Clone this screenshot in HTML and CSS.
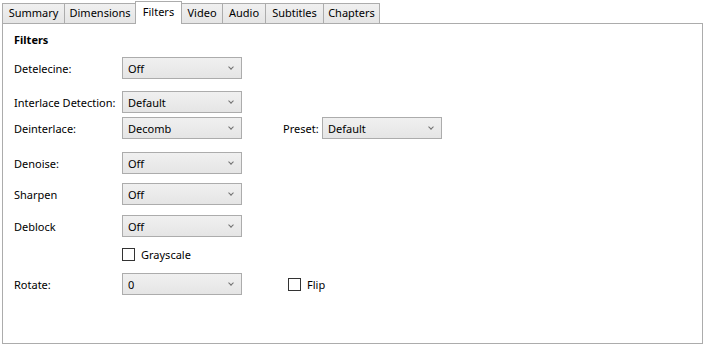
FILE: index.html
```html
<!DOCTYPE html>
<html lang="en">
<head>
    <meta charset="UTF-8">
    <meta name="viewport" content="width=device-width, initial-scale=1.0">
    <title>Filters</title>
    <link rel="stylesheet" href="styles.css">
</head>
<body>
    <div class="tabs">
        <div class="tab tab-summary">Summary</div>
        <div class="tab tab-dimensions">Dimensions</div>
        <div class="tab tab-filters active">Filters</div>
        <div class="tab tab-video">Video</div>
        <div class="tab tab-audio">Audio</div>
        <div class="tab tab-subtitles">Subtitles</div>
        <div class="tab tab-chapters">Chapters</div>
    </div>

    <div class="panel">
        <h2 class="title">Filters</h2>

        <div class="row row-detelecine">
            <span class="label">Detelecine:</span>
            <div class="combo"><span>Off</span><i class="arrow"></i></div>
        </div>

        <div class="row row-interlace">
            <span class="label">Interlace Detection:</span>
            <div class="combo"><span>Default</span><i class="arrow"></i></div>
        </div>

        <div class="row row-deinterlace">
            <span class="label">Deinterlace:</span>
            <div class="combo"><span>Decomb</span><i class="arrow"></i></div>
            <span class="label-preset">Preset:</span>
            <div class="combo"><span>Default</span><i class="arrow"></i></div>
        </div>

        <div class="row row-denoise">
            <span class="label">Denoise:</span>
            <div class="combo"><span>Off</span><i class="arrow"></i></div>
        </div>

        <div class="row row-sharpen">
            <span class="label">Sharpen</span>
            <div class="combo"><span>Off</span><i class="arrow"></i></div>
        </div>

        <div class="row row-deblock">
            <span class="label">Deblock</span>
            <div class="combo"><span>Off</span><i class="arrow"></i></div>
        </div>

        <div class="row row-grayscale">
            <span class="label"></span>
            <label class="check"><span class="box"></span>Grayscale</label>
        </div>

        <div class="row row-rotate">
            <span class="label">Rotate:</span>
            <div class="combo"><span>0</span><i class="arrow"></i></div>
            <label class="check check-flip"><span class="box"></span>Flip</label>
        </div>
    </div>
</body>
</html>
```

FILE: styles.css
```css
body {
    margin: 0;
    font-family: 'Noto Sans', 'Open Sans', sans-serif;
    font-size: 11px;
    color: #000;
    background-color: #fff;
}
.tabs {
    display: flex;
    align-items: flex-end;
    height: 23px;
    padding-left: 2px;
    position: relative;
    z-index: 1;
}
.tab {
    box-sizing: border-box;
    height: 20px;
    line-height: 18px;
    border: 1px solid #acacac;
    border-bottom: none;
    margin-right: -1px;
    background: linear-gradient(#f0f0f0, #e5e5e5);
    text-align: center;
    white-space: nowrap;
}
.tab.active {
    height: 23px;
    margin-bottom: -1px;
    line-height: 20px;
    background: #fff;
    position: relative;
    z-index: 2;
}
.tab-summary { width: 63px; }
.tab-dimensions { width: 72px; }
.tab-filters { width: 47px; }
.tab-video { width: 42px; }
.tab-audio { width: 44px; }
.tab-subtitles { width: 59px; }
.tab-chapters { width: 57px; }
.panel {
    box-sizing: border-box;
    margin-left: 2px;
    width: 701px;
    height: 321px;
    border: 1px solid #acacac;
    padding: 8px 0 0 11px;
}
.title {
    margin: 0;
    font-size: 11px;
    font-weight: bold;
    line-height: 16px;
}
.row {
    display: flex;
    align-items: center;
    height: 22px;
    white-space: nowrap;
}
.row-detelecine { margin-top: 9px; }
.row-interlace { margin-top: 12px; }
.row-deinterlace { margin-top: 4px; }
.row-denoise { margin-top: 13px; }
.row-sharpen { margin-top: 9px; }
.row-deblock { margin-top: 10px; }
.row-grayscale { margin-top: 6px; }
.row-rotate { margin-top: 8px; }
.label {
    width: 108px;
    flex: none;
}
.label-preset {
    margin-left: 41px;
    width: 39px;
}
.combo {
    box-sizing: border-box;
    width: 120px;
    height: 22px;
    border: 1px solid #acacac;
    background: linear-gradient(#f0f0f0, #e5e5e5);
    display: flex;
    align-items: center;
    justify-content: space-between;
    padding: 0 8px 0 5px;
}
.arrow {
    width: 3px;
    height: 3px;
    border-right: 1px solid #707070;
    border-bottom: 1px solid #707070;
    transform: rotate(45deg);
    margin-top: -3px;
}
.check {
    display: flex;
    align-items: center;
}
.box {
    box-sizing: border-box;
    width: 13px;
    height: 13px;
    border: 1px solid #333;
    background: #fff;
    margin-right: 6px;
}
.check-flip {
    margin-left: 46px;
}
```
